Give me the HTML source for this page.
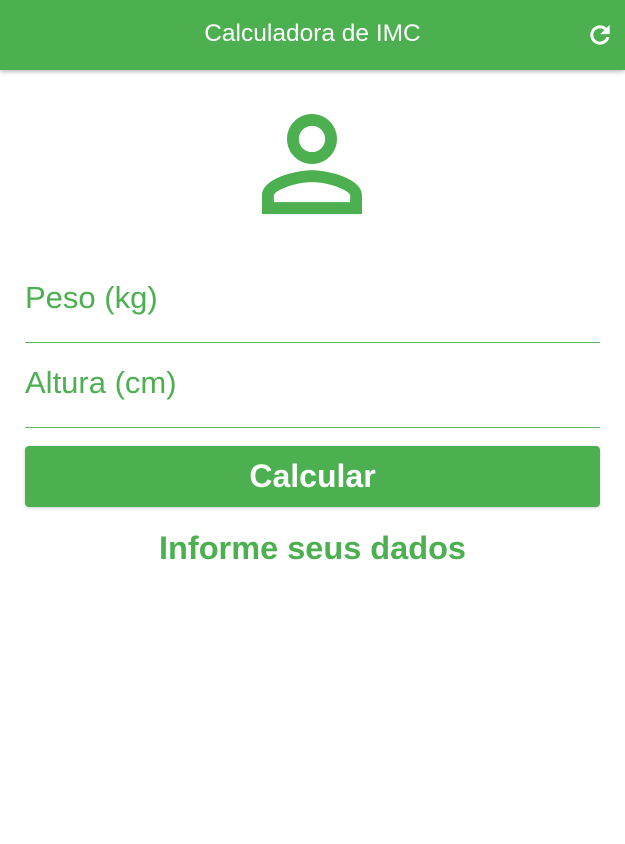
<!DOCTYPE html>
<html><head><style>
body{margin:0;width:625px;height:844px;background:#fff;font-family:"Liberation Sans",sans-serif;position:relative;overflow:hidden}
.bar{position:absolute;left:0;top:0;width:625px;height:70px;background:#4CAF50;box-shadow:0 2px 4px rgba(0,0,0,.25)}
.bar .t{position:absolute;left:0;right:0;top:20px;text-align:center;color:#fff;font-size:24.5px}
.lbl{position:absolute;left:25px;color:#4CAF50;font-size:31px}
.line{position:absolute;left:25px;width:575px;height:1px;background:#5cb860}
.btn{position:absolute;left:25px;top:446px;width:575px;height:61px;background:#4CAF50;border-radius:4px;color:#fff;font-weight:bold;font-size:32px;text-align:center;line-height:61px;box-shadow:0 1px 3px rgba(0,0,0,.2)}
.res{position:absolute;left:0;right:0;top:530px;text-align:center;color:#4CAF50;font-weight:bold;font-size:32.5px}
</style></head><body>
<div class="bar"><div class="t">Calculadora de IMC</div>
<svg style="position:absolute;left:586px;top:21px" width="28" height="28" viewBox="0 0 24 24"><path fill="#fff" stroke="#fff" stroke-width="0.6" d="M17.65 6.35A7.958 7.958 0 0 0 12 4c-4.42 0-7.99 3.58-7.99 8s3.57 8 7.99 8c3.73 0 6.84-2.55 7.73-6h-2.08A5.99 5.99 0 0 1 12 18c-3.31 0-6-2.69-6-6s2.69-6 6-6c1.66 0 3.14.69 4.22 1.78L13 11h7V4l-2.35 2.35z"/></svg>
</div>
<svg style="position:absolute;left:237px;top:89px" width="150" height="150" viewBox="0 0 24 24"><path fill="#4CAF50" d="M12 5.9c1.16 0 2.1.94 2.1 2.1s-.94 2.1-2.1 2.1S9.9 9.16 9.9 8s.94-2.1 2.1-2.1m0 9c2.97 0 6.1 1.46 6.1 2.1v1.1H5.9V17c0-.64 3.13-2.1 6.1-2.1M12 4C9.79 4 8 5.79 8 8s1.79 4 4 4 4-1.79 4-4-1.79-4-4-4zm0 9c-2.67 0-8 1.34-8 4v3h16v-3c0-2.66-5.33-4-8-4z"/></svg>
<div class="lbl" style="top:280px">Peso (kg)</div>
<div class="line" style="top:342px"></div>
<div class="lbl" style="top:365px">Altura (cm)</div>
<div class="line" style="top:427px"></div>
<div class="btn">Calcular</div>
<div class="res">Informe seus dados</div>
</body></html>
